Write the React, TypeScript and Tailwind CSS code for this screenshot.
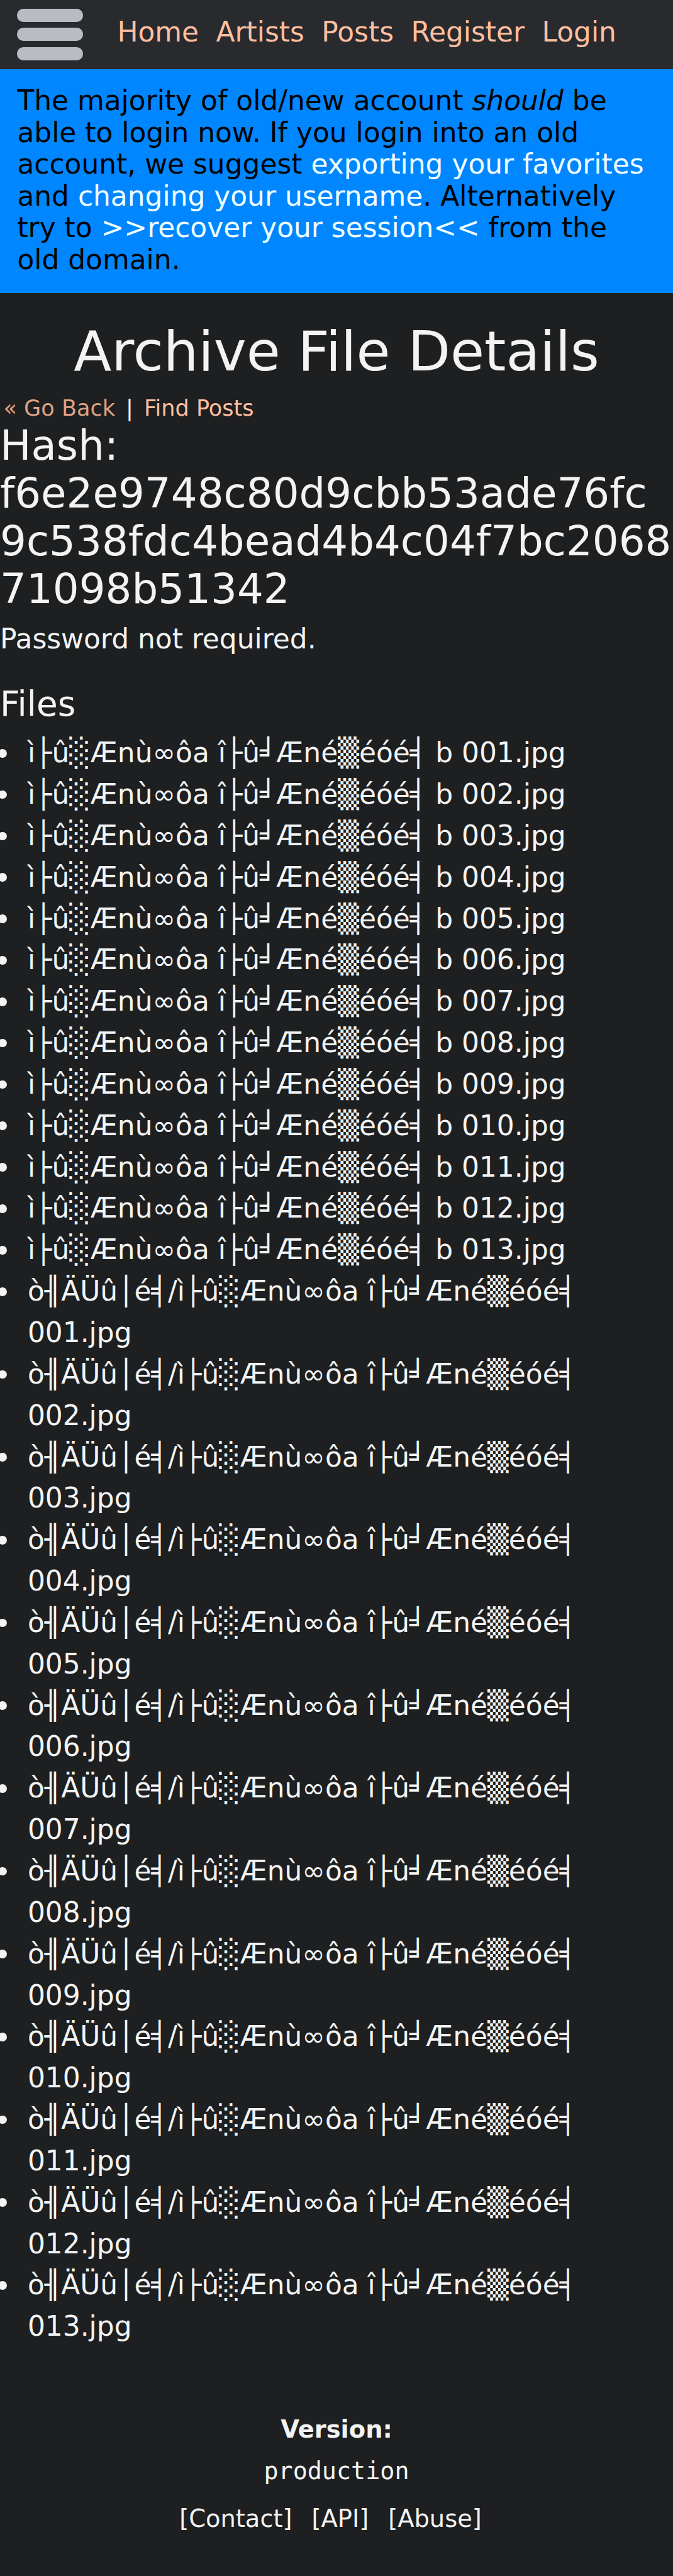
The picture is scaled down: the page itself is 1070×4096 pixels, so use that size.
const NAV_LINKS = ["Home", "Artists", "Posts", "Register", "Login"]

const FOOTER_LINKS = ["[Contact]", "[API]", "[Abuse]"]

const HASH = "f6e2e9748c80d9cbb53ade76fc9c538fdc4bead4b4c04f7bc206871098b51342"

const NUMBERS = Array.from({ length: 13 }, (_, i) => String(i + 1).padStart(3, "0"))

const FILES = [
  ...NUMBERS.map((n) => `ì├û░Ænù∞ôa î├û╛Æné▒éóé╡ b ${n}.jpg`),
  ...NUMBERS.map((n) => `ò╢ÄÜû│é╡/ì├û░Ænù∞ôa î├û╛Æné▒éóé╡ ${n}.jpg`),
]

function Header() {
  return (
    <header className="flex h-[109.7px] items-start bg-[#282a2e]">
      <button className="mt-[13.7px] ml-[27.4px] flex h-[82.3px] w-[104.3px] flex-col justify-between">
        <span className="h-[21px] w-full rounded-[10px] bg-[#babcc4]" />
        <span className="h-[21px] w-full rounded-[10px] bg-[#babcc4]" />
        <span className="h-[21px] w-full rounded-[10px] bg-[#babcc4]" />
      </button>
      <nav className="mt-[25.5px] ml-[54.8px] flex gap-[27.4px] leading-[50.5px] text-[#ffbf9f]">
        {NAV_LINKS.map((label) => (
          <a key={label} href="#">{label}</a>
        ))}
      </nav>
    </header>
  )
}

function Banner() {
  return (
    <div className="h-[356.7px] bg-[#0086ff] px-[27.4px] pt-[25.6px] leading-[50.48px] text-black">
      The majority of old/new account <i>should</i> be able to login now. If you login into an old
      account, we suggest <a href="#" className="text-[#f0ffff]">exporting your favorites</a> and{" "}
      <a href="#" className="text-[#f0ffff]">changing your username</a>. Alternatively try to{" "}
      <a href="#" className="text-[#f0ffff]">&gt;&gt;recover your session&lt;&lt;</a> from the old domain.
    </div>
  )
}

export default function App() {
  return (
    <div className="h-[4096px] w-[1070px] overflow-hidden bg-[#1d1f20] font-['DejaVu_Sans',sans-serif] text-[43.9px] text-[#f3f3f3]">
      <Header />
      <Banner />

      <main>
        <h1 className="pt-[43px] text-center text-[87.8px] leading-[101px]">Archive File Details</h1>
        <div className="mt-[17px] mb-px flex h-[43px] gap-[17px] pl-[5.5px] text-[35.1px] leading-[43px]">
          <a href="#" className="text-[#dda284]">« Go Back</a>
          <span>|</span>
          <a href="#" className="text-[#ffbf9f]">Find Posts</a>
        </div>
        <h2 className="text-[65.85px] leading-[75.72px] break-all">
          Hash:
          <br />
          {HASH}
        </h2>
        <p className="mt-[9px] leading-[65.85px]">Password not required.</p>
        <h3 className="mt-[39px] text-[54.87px] leading-[63.1px]">Files</h3>
        <ul className="mt-[13px] leading-[65.85px]">
          {FILES.map((name) => (
            <li key={name} className="flex items-start">
              {/* Bullet hangs slightly off the left edge */}
              <span className="mt-[26.7px] mr-[33px] -ml-[2.8px] size-[13.7px] shrink-0 rounded-full bg-[#f3f3f3]" />
              <span>{name}</span>
            </li>
          ))}
        </ul>
      </main>

      <footer className="mt-[102px] flex flex-col items-center text-[38.4px] leading-[57.6px]">
        <b>Version:</b>
        <span className="mt-[8px] font-['DejaVu_Sans_Mono',monospace]">production</span>
        <div className="mt-[19px] flex gap-[31px] pr-[19px]">
          {FOOTER_LINKS.map((label) => (
            <a key={label} href="#">{label}</a>
          ))}
        </div>
      </footer>
    </div>
  )
}
